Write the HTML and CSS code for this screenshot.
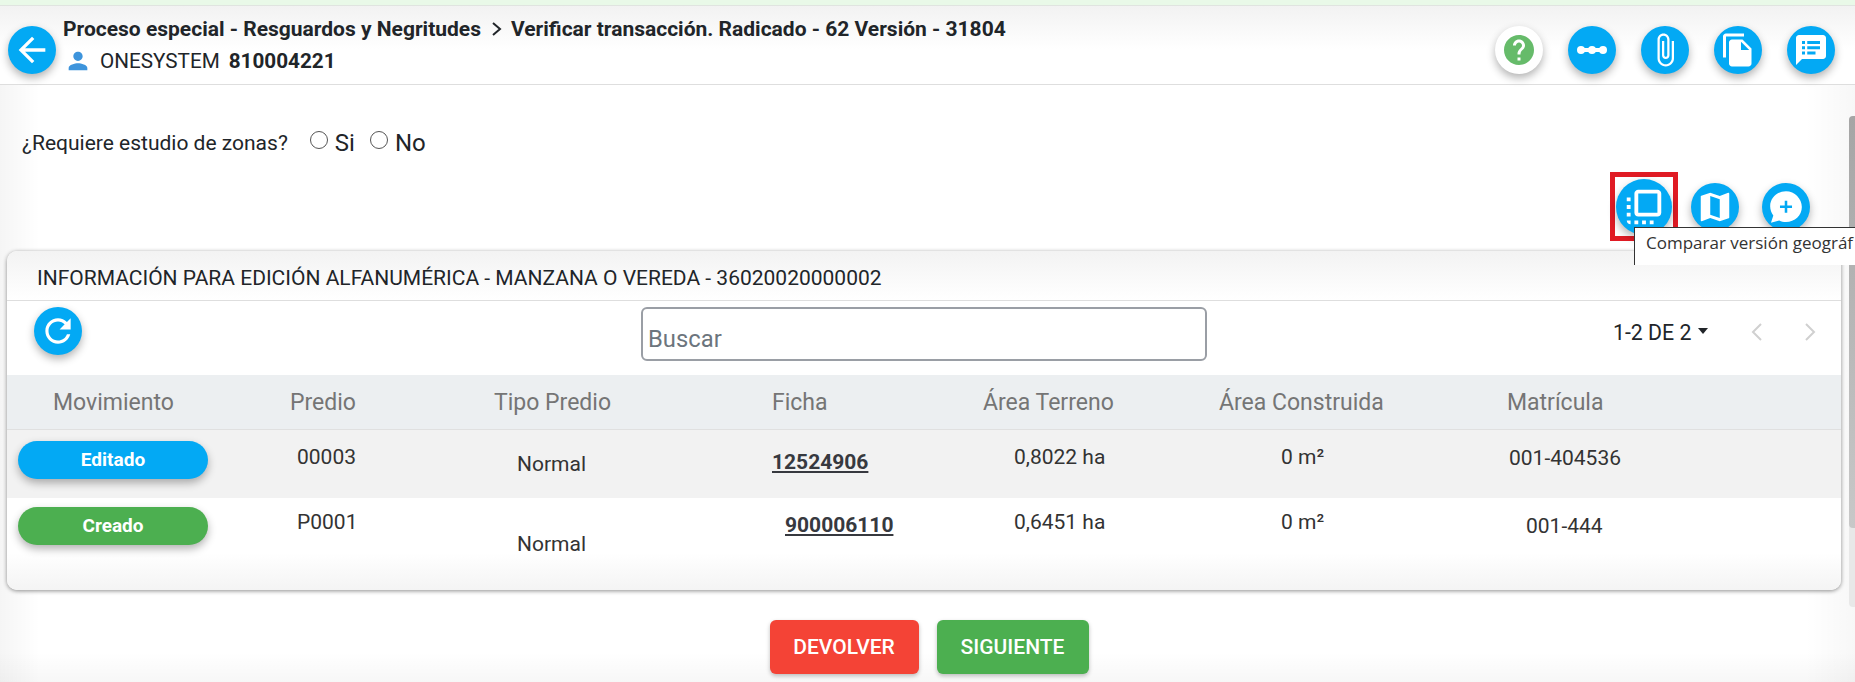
FILE: index.html
```html
<!DOCTYPE html>
<html lang="es">
<head>
    <meta charset="UTF-8">
    <meta name="viewport" content="width=device-width, initial-scale=1.0">
    <title>Verificar transacción</title>
    <link rel="stylesheet" href="styles.css">
</head>
<body>
    <div class="top-strip"></div>

    <header class="topbar">
        <button class="fab back-btn">
            <svg viewBox="0 0 24 24" width="40" height="40"><path d="M20 11H7.83l5.59-5.59L12 4l-8 8 8 8 1.41-1.41L7.83 13H20v-2z"/></svg>
        </button>
        <div class="topbar-text">
            <div class="crumbs">
                <span>Proceso especial - Resguardos y Negritudes</span>
                <svg class="crumb-arrow" viewBox="0 0 12 16" width="12" height="16"><path d="M2 2l7 6-7 6" fill="none" stroke="#212529" stroke-width="2"/></svg>
                <span>Verificar transacción. Radicado - 62 Versión - 31804</span>
            </div>
            <div class="owner">
                <svg viewBox="0 0 24 24" width="28" height="28"><path d="M12 12c2.21 0 4-1.79 4-4s-1.79-4-4-4-4 1.79-4 4 1.79 4 4 4zm0 2c-2.67 0-8 1.34-8 4v2h16v-2c0-2.66-5.33-4-8-4z"/></svg>
                <span class="owner-name">ONESYSTEM</span>
                <b>810004221</b>
            </div>
        </div>
        <div class="topbar-actions">
            <button class="fab fab-white">
                <svg viewBox="0 0 24 24" width="36" height="36"><path d="M12 2C6.48 2 2 6.48 2 12s4.48 10 10 10 10-4.48 10-10S17.52 2 12 2zm1 17h-2v-2h2v2zm2.07-7.75l-.9.92C13.45 12.9 13 13.5 13 15h-2v-.5c0-1.1.45-2.1 1.17-2.83l1.24-1.26c.37-.36.59-.86.59-1.41 0-1.1-.9-2-2-2s-2 .9-2 2H8c0-2.21 1.79-4 4-4s4 1.79 4 4c0 .88-.36 1.68-.93 2.25z"/></svg>
            </button>
            <button class="fab">
                <svg viewBox="0 0 32 32" width="32" height="32"><path d="M4 14h24v4H4z"/><circle cx="5" cy="16" r="4"/><circle cx="16" cy="16" r="4"/><circle cx="27" cy="16" r="4"/></svg>
            </button>
            <button class="fab">
                <svg viewBox="0 0 24 24" width="36" height="36"><path d="M16.5 6v11.5c0 2.21-1.79 4-4 4s-4-1.79-4-4V5c0-1.38 1.12-2.5 2.5-2.5s2.5 1.12 2.5 2.5v10.5c0 .55-.45 1-1 1s-1-.45-1-1V6H10v9.5c0 1.38 1.12 2.5 2.5 2.5s2.5-1.12 2.5-2.5V5c0-2.21-1.79-4-4-4S7 2.79 7 5v12.5c0 3.04 2.46 5.5 5.5 5.5s5.5-2.46 5.5-5.5V6h-1.5z"/></svg>
            </button>
            <button class="fab">
                <svg viewBox="0 0 24 24" width="36" height="36"><path d="M16 1H4c-1.1 0-2 .9-2 2v14h2V3h12V1zm-1 4l6 6v10c0 1.1-.9 2-2 2H7.99C6.89 23 6 22.1 6 21l.01-14c0-1.1.89-2 1.99-2h7zm-1 7h5.5L14 6.5V12z"/></svg>
            </button>
            <button class="fab">
                <svg viewBox="0 0 24 24" width="36" height="36"><path d="M20 2H4c-1.1 0-2 .9-2 2v18l4-4h14c1.1 0 2-.9 2-2V4c0-1.1-.9-2-2-2z"/><path class="icon-cut" d="M6 6h2v2H6zM6 9.500h2v2H6zM6 13h2v2H6zM9.500 6H18v2H9.500zM9.500 9.500H18v2H9.500zM9.500 13H15v2H9.500z"/></svg>
            </button>
        </div>
    </header>

    <main class="content">
        <div class="question">
            <span class="question-label">¿Requiere estudio de zonas?</span>
            <label class="radio-opt"><span class="radio"></span>Si</label>
            <label class="radio-opt"><span class="radio"></span>No</label>
        </div>

        <div class="tools">
            <div class="tool-marked">
                <button class="fab fab-big">
                    <svg viewBox="0 0 24 24" width="46" height="46"><path d="M3 13h2v-2H3v2zm0 4h2v-2H3v2zm2 4v-2H3c0 1.100.89 2 2 2zM3 9h2V7H3v2zm12 12h2v-2h-2v2zm4-18H9c-1.110 0-2 .9-2 2v10c0 1.100.89 2 2 2h10c1.100 0 2-.9 2-2V5c0-1.100-.9-2-2-2zm0 12H9V5h10v10zm-8 6h2v-2h-2v2zm-4 0h2v-2H7v2z"/></svg>
                </button>
                <div class="tooltip">Comparar versión geográf</div>
            </div>
            <button class="fab">
                <svg viewBox="0 0 24 24" width="38" height="38"><path d="M20.500 3l-.16.03L15 5.100 9 3 3.360 4.900c-.21.07-.36.25-.36.48V20.500c0 .28.22.5.5.5l.16-.03L9 18.900l6 2.100 5.640-1.900c.21-.07.36-.25.36-.48V3.500c0-.28-.22-.5-.5-.5zM15 19l-6-2.110V5l6 2.110V19z"/></svg>
            </button>
            <button class="fab">
                <svg viewBox="0 0 24 24" width="38" height="38"><path d="M12 2C6.480 2 2 6.200 2 11.500c0 2.200.8 4.200 2 5.800L2.500 22l5.200-1.500c1.300.6 2.800 1 4.300 1 5.520 0 10-4.200 10-9.500S17.520 2 12 2z"/><path class="icon-cut" d="M11.200 8h1.600v3h3v1.600h-3v3h-1.600v-3h-3V11h3z"/></svg>
            </button>
        </div>

        <section class="card">
            <div class="card-title">INFORMACIÓN PARA EDICIÓN ALFANUMÉRICA - MANZANA O VEREDA - 36020020000002</div>

            <div class="table-tools">
                <button class="fab">
                    <svg viewBox="0 0 24 24" width="38" height="38"><path d="M17.650 6.350C16.200 4.900 14.210 4 12 4c-4.420 0-7.990 3.580-7.990 8s3.570 8 7.990 8c3.730 0 6.840-2.550 7.730-6h-2.080c-.82 2.330-3.040 4-5.650 4-3.310 0-6-2.690-6-6s2.690-6 6-6c1.660 0 3.140.69 4.220 1.780L13 11h7V4l-2.350 2.350z"/></svg>
                </button>
                <input class="search" type="text" placeholder="Buscar">
                <div class="pager">
                    <span class="pager-count">1-2 DE 2</span>
                    <span class="pager-caret"></span>
                    <svg class="pager-prev" viewBox="0 0 12 20" width="12" height="20"><path d="M10 2l-8 8 8 8" fill="none" stroke="#d0d0d0" stroke-width="2"/></svg>
                    <svg class="pager-next" viewBox="0 0 12 20" width="12" height="20"><path d="M2 2l8 8-8 8" fill="none" stroke="#d0d0d0" stroke-width="2"/></svg>
                </div>
            </div>

            <div class="grid-row grid-head">
                <div class="head-first">Movimiento</div>
                <div>Predio</div>
                <div>Tipo Predio</div>
                <div>Ficha</div>
                <div>Área Terreno</div>
                <div>Área Construida</div>
                <div>Matrícula</div>
            </div>

            <div class="grid-row grid-body row-one">
                <div><span class="badge badge-blue">Editado</span></div>
                <div class="cell-predio">00003</div>
                <div class="cell-tipo">Normal</div>
                <div class="cell-ficha"><a href="#">12524906</a></div>
                <div class="cell-area">0,8022 ha</div>
                <div class="cell-cons">0 m²</div>
                <div class="cell-mat">001-404536</div>
            </div>

            <div class="grid-row grid-body row-two">
                <div><span class="badge badge-green">Creado</span></div>
                <div class="cell-predio">P0001</div>
                <div class="cell-tipo">Normal</div>
                <div class="cell-ficha"><a href="#">900006110</a></div>
                <div class="cell-area">0,6451 ha</div>
                <div class="cell-cons">0 m²</div>
                <div class="cell-mat">001-444</div>
            </div>
        </section>

        <div class="actions">
            <button class="btn btn-red">DEVOLVER</button>
            <button class="btn btn-green">SIGUIENTE</button>
        </div>
    </main>

    <div class="scroll-track"><div class="scroll-thumb"></div></div>
</body>
</html>
```

FILE: styles.css
```css
* {
    box-sizing: border-box;
}
html, body {
    height: 682px;
    margin: 0;
    overflow: hidden;
}
body {
    position: relative;
    font-family: Roboto, sans-serif;
    color: #212529;
    background:
        linear-gradient(90deg, rgba(0, 0, 0, 0.04), rgba(0, 0, 0, 0) 40px),
        linear-gradient(270deg, rgba(0, 0, 0, 0.03), rgba(0, 0, 0, 0) 50px),
        linear-gradient(0deg, rgba(0, 0, 0, 0.03), rgba(0, 0, 0, 0) 30px),
        #fff;
}
button {
    font-family: inherit;
    border: none;
    padding: 0;
    cursor: pointer;
}
.top-strip {
    height: 5px;
    background: #e9f9e8;
}
.topbar {
    display: flex;
    align-items: flex-start;
    height: 80px;
    padding: 20px 20px 0 8px;
    border-bottom: 1px solid #dedede;
    border-top: 1px solid #e0e4e0;
    background: linear-gradient(#f2f2f2, #fff 55%);
}
.fab {
    display: flex;
    align-items: center;
    justify-content: center;
    flex: none;
    width: 48px;
    height: 48px;
    border-radius: 50%;
    background: #03a9f4;
    box-shadow: 0 4px 8px rgba(0, 0, 0, 0.3);
}
.fab svg {
    fill: #fff;
}
.fab .icon-cut {
    fill: #03a9f4;
}
.fab-white {
    background: #fff;
}
.fab-white svg {
    fill: #66bb6a;
}
.fab-big {
    width: 56px;
    height: 56px;
}
.topbar-text {
    margin-left: 7px;
    margin-top: -12px;
}
.crumbs {
    display: flex;
    align-items: center;
    height: 30px;
    font-size: 21px;
    font-weight: 700;
}
.crumb-arrow {
    margin: 0 8px 0 10px;
}
.owner {
    display: flex;
    align-items: center;
    height: 32px;
    margin-top: 1px;
    font-size: 20.700px;
}
.owner svg {
    fill: #3d94dc;
    margin-left: 1px;
}
.owner-name {
    margin: 0 9px 0 8px;
}
.topbar-actions {
    display: flex;
    gap: 25px;
    margin-left: auto;
}
.content {
    padding: 0 7px;
}
.question {
    display: flex;
    align-items: center;
    height: 36px;
    margin-top: 40px;
    padding-left: 15px;
    font-size: 21px;
}
.question-label {
    margin-right: 22px;
}
.radio-opt {
    display: flex;
    align-items: center;
    margin-right: 15px;
    font-size: 24px;
}
.radio {
    width: 18px;
    height: 18px;
    margin: -6px 7px 0 0;
    border: 1px solid #555;
    border-radius: 50%;
    background: #fff;
}
.tools {
    display: flex;
    align-items: center;
    justify-content: flex-end;
    gap: 23px;
    height: 69px;
    margin-top: 11px;
    padding-right: 38px;
}
.tool-marked {
    position: relative;
    display: flex;
    align-items: center;
    justify-content: center;
    width: 68px;
    height: 69px;
    margin-right: -10px;
    border: 5px solid #e01b24;
}
.tooltip {
    position: absolute;
    top: 50px;
    left: 19px;
    width: 240px;
    height: 38px;
    padding: 3px 0 0 11px;
    font-family: "Open Sans", sans-serif;
    font-size: 17px;
    white-space: nowrap;
    overflow: hidden;
    color: #333;
    background: #fff;
    border-top: 1px solid #333;
    border-left: 1px solid #333;
    z-index: 2;
}
.card {
    height: 339px;
    margin-top: 10px;
    width: 1834px;
    border-radius: 10px;
    background: #fff;
    box-shadow: 0 1px 4px rgba(0, 0, 0, 0.45);
    overflow: hidden;
}
.card-title {
    height: 50px;
    padding: 15px 0 0 30px;
    font-size: 21px;
    border-bottom: 1px solid #dedede;
    background: linear-gradient(#f3f3f3, #fff);
}
.table-tools {
    display: flex;
    align-items: flex-start;
    height: 74px;
    padding: 6px 0 0 27px;
}
.search {
    flex: none;
    width: 566px;
    height: 54px;
    margin-left: 559px;
    padding: 10px 5px 0;
    font-family: inherit;
    font-size: 23.800px;
    border: 2px solid #9a9ea5;
    border-radius: 6px;
    outline: none;
}
.search::placeholder {
    color: #6c757d;
}
.pager {
    display: flex;
    align-items: center;
    flex: none;
    height: 54px;
    margin-left: 406px;
    font-size: 21.300px;
    margin-top: -2px;
    white-space: nowrap;
}
.pager-caret {
    width: 0;
    height: 0;
    margin: -2px 0 0 7px;
    border: 5.500px solid transparent;
    border-top: 6px solid #212529;
    border-bottom: 0;
}
.pager-prev {
    margin-left: 43px;
}
.pager-next {
    margin-left: 41px;
}
.grid-row {
    display: grid;
    grid-template-columns: 283px 204px 278px 211px 236px 288px 1fr;
}
.grid-head {
    height: 55px;
    padding-top: 14px;
    font-size: 23px;
    color: #757575;
    background: #eceff1;
    border-bottom: 1px solid #e0e0e0;
}
.head-first {
    padding-left: 46px;
}
.grid-body {
    font-size: 21px;
    color: #333;
}
.row-one {
    height: 68px;
    background: #f2f2f2;
}
.row-two {
    height: 92px;
    background: linear-gradient(#fff 60%, #f4f4f4);
}
.badge {
    display: block;
    width: 190px;
    height: 38px;
    margin-left: 11px;
    font-size: 19px;
    font-weight: 700;
    line-height: 38px;
    text-align: center;
    color: #fff;
    border-radius: 19px;
    box-shadow: 0 4px 8px rgba(0, 0, 0, 0.3);
}
.badge-blue {
    margin-top: 11px;
    background: #03a9f4;
}
.badge-green {
    margin-top: 9px;
    background: #4caf50;
}
.cell-predio {
    padding-left: 7px;
}
.cell-tipo {
    padding-left: 23px;
}
.cell-ficha a {
    font-weight: 700;
    color: #37393f;
}
.cell-area {
    padding-left: 31px;
}
.cell-cons {
    padding-left: 62px;
}
.cell-mat {
    padding-left: 2px;
}
.row-one .cell-predio,
.row-one .cell-area,
.row-one .cell-cons {
    padding-top: 15px;
}
.row-one .cell-mat {
    padding-top: 16px;
}
.row-one .cell-tipo {
    padding-top: 22px;
}
.row-one .cell-ficha {
    padding-top: 20px;
}
.row-two .cell-predio,
.row-two .cell-area,
.row-two .cell-cons {
    padding-top: 12px;
}
.row-two .cell-tipo {
    padding-top: 34px;
}
.row-two .cell-ficha {
    padding: 15px 0 0 13px;
}
.row-two .cell-mat {
    padding: 16px 0 0 19px;
}
.actions {
    display: flex;
    justify-content: center;
    gap: 18px;
    margin-top: 30px;
    padding-left: 3px;
}
.btn {
    height: 54px;
    font-size: 21px;
    font-weight: 500;
    color: #fff;
    border-radius: 6px;
    box-shadow: 0 2px 4px rgba(0, 0, 0, 0.25);
}
.btn-red {
    width: 149px;
    background: #f44336;
}
.btn-green {
    width: 152px;
    background: #4caf50;
}
.scroll-track {
    position: absolute;
    top: 116px;
    right: 0;
    width: 6px;
    height: 491px;
    background: #e8e8e8;
    border-radius: 4px 0 0 4px;
}
.scroll-thumb {
    height: 412px;
    background: linear-gradient(#a5a5a5, #c8c8c8);
    border-radius: 4px 0 0 4px;
}
```
